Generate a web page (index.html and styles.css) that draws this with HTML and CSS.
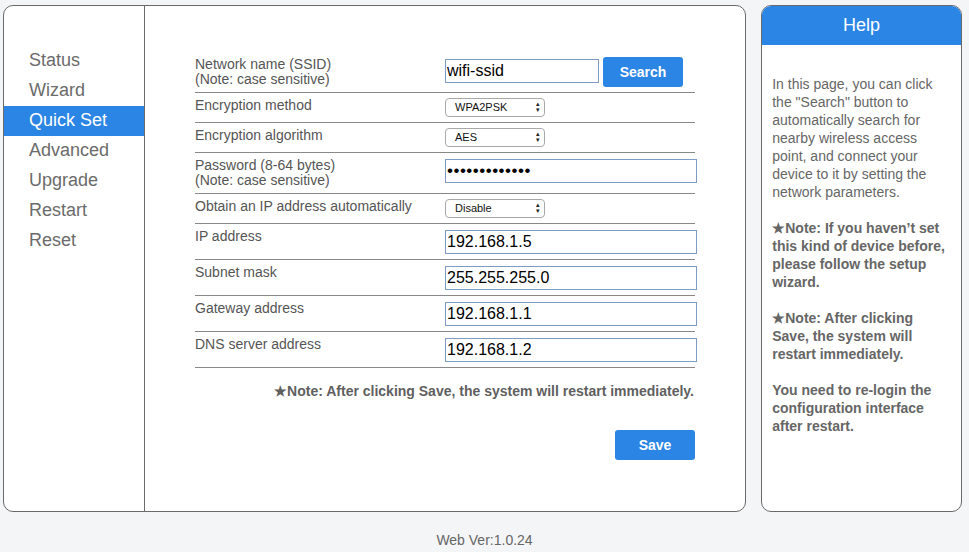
FILE: index.html
```html
<!DOCTYPE html>
<html>
<head>
<meta charset="utf-8">
<link rel="stylesheet" href="styles.css">
</head>
<body>
<div class="page">
  <div class="main-card">
    <nav class="sidebar">
      <div class="menu-item">Status</div>
      <div class="menu-item">Wizard</div>
      <div class="menu-item active">Quick Set</div>
      <div class="menu-item">Advanced</div>
      <div class="menu-item">Upgrade</div>
      <div class="menu-item">Restart</div>
      <div class="menu-item">Reset</div>
    </nav>
    <div class="content">
      <table class="form">
        <tr>
          <td class="label">Network name (SSID)<br>(Note: case sensitive)</td>
          <td class="field"><div class="ssid-line"><input class="text ssid" type="text" value="wifi-ssid"><button class="btn">Search</button></div></td>
        </tr>
        <tr>
          <td class="label">Encryption method</td>
          <td class="field"><div class="select"><span>WPA2PSK</span><span class="arrows">&#9652;<br>&#9662;</span></div></td>
        </tr>
        <tr>
          <td class="label">Encryption algorithm</td>
          <td class="field"><div class="select"><span>AES</span><span class="arrows">&#9652;<br>&#9662;</span></div></td>
        </tr>
        <tr>
          <td class="label">Password (8-64 bytes)<br>(Note: case sensitive)</td>
          <td class="field"><input class="text pwd" type="password" value="wifipassword1"></td>
        </tr>
        <tr>
          <td class="label">Obtain an IP address automatically</td>
          <td class="field"><div class="select"><span>Disable</span><span class="arrows">&#9652;<br>&#9662;</span></div></td>
        </tr>
        <tr>
          <td class="label">IP address</td>
          <td class="field"><input class="text wide" type="text" value="192.168.1.5"></td>
        </tr>
        <tr>
          <td class="label">Subnet mask</td>
          <td class="field"><input class="text wide" type="text" value="255.255.255.0"></td>
        </tr>
        <tr>
          <td class="label">Gateway address</td>
          <td class="field"><input class="text wide" type="text" value="192.168.1.1"></td>
        </tr>
        <tr>
          <td class="label">DNS server address</td>
          <td class="field"><input class="text wide" type="text" value="192.168.1.2"></td>
        </tr>
      </table>
      <p class="note">&#9733;Note: After clicking Save, the system will restart immediately.</p>
      <div class="actions"><button class="btn">Save</button></div>
    </div>
  </div>
  <aside class="help-card">
    <div class="help-head">Help</div>
    <div class="help-body">
      In this page, you can click the "Search" button to automatically search for nearby wireless access point, and connect your device to it by setting the network parameters.<br><br>
      <b>&#9733;Note: If you haven’t set this kind of device before, please follow the setup wizard.</b><br><br>
      <b>&#9733;Note: After clicking Save, the system will restart immediately.</b><br><br>
      <b>You need to re-login the configuration interface after restart.</b>
    </div>
  </aside>
</div>
<footer class="footer">Web Ver:1.0.24</footer>
</body>
</html>
```

FILE: styles.css
```css
html, body {
  margin: 0;
  padding: 0;
}
body {
  background: #f4f5f7;
  font-family: "Liberation Sans", Arial, sans-serif;
  color: #666;
}
.page {
  display: flex;
  gap: 15px;
  padding: 5px 7px 0 3px;
}
.main-card {
  width: 744px;
  height: 507px;
  box-sizing: border-box;
  border: 1px solid #6a6a6a;
  border-radius: 10px;
  background: #fff;
  display: flex;
  overflow: hidden;
}
.sidebar {
  width: 140px;
  flex: none;
  border-right: 1px solid #6a6a6a;
  padding-top: 40px;
}
.menu-item {
  height: 30px;
  line-height: 29px;
  font-size: 18px;
  padding-left: 25px;
  color: #6b6b6b;
}
.menu-item.active {
  background: #2b85e4;
  color: #fff;
}
.content {
  flex: 1;
  padding: 46px 0 0 50px;
}
.form {
  width: 500px;
  table-layout: fixed;
  border-collapse: collapse;
  font-size: 14px;
  color: #555;
}
.form tr {
  border-bottom: 1px solid #888;
}
.form td {
  vertical-align: top;
  padding: 5px 0;
  line-height: 15px;
}
.label {
  width: 250px;
}
.ssid-line {
  display: flex;
  gap: 4px;
  align-items: flex-start;
}
.text {
  box-sizing: border-box;
  height: 24px;
  border: 1px solid #7e9bc1;
  padding: 1px 1px;
  font-family: "Liberation Sans", Arial, sans-serif;
  font-size: 16px;
  color: #000;
  margin: 1px 0 0 0;
  display: block;
  outline: none;
  background: #fff;
}
.ssid {
  width: 154px;
  flex: none;
  margin-top: 2px;
}
.wide, .pwd {
  width: 252px;
}
.pwd {
  font-size: 17px;
  letter-spacing: 0.5px;
}
.btn {
  width: 80px;
  height: 30px;
  flex: none;
  border: none;
  border-radius: 3px;
  background: #2b85e4;
  color: #fff;
  font-family: "Liberation Sans", Arial, sans-serif;
  font-weight: bold;
  font-size: 14px;
  padding: 0;
}
.select {
  position: relative;
  box-sizing: border-box;
  width: 100px;
  height: 19px;
  border: 1px solid #a8a8a8;
  border-radius: 4px;
  background: #fff;
  font-size: 11px;
  line-height: 17px;
  color: #111;
  padding-left: 9px;
}
.arrows {
  position: absolute;
  right: 4px;
  top: 2px;
  font-size: 7px;
  line-height: 6px;
  color: #222;
}
.note {
  margin: 15px 0 0 0;
  width: 499px;
  text-align: right;
  font-size: 14px;
  font-weight: bold;
  color: #5f5f5f;
}
.actions {
  width: 500px;
  display: flex;
  justify-content: flex-end;
  margin-top: 31px;
}
.help-card {
  width: 201px;
  height: 507px;
  box-sizing: border-box;
  border: 1px solid #6a6a6a;
  border-radius: 10px;
  background: #fff;
  overflow: hidden;
}
.help-head {
  margin: -1px -1px 0 -1px;
  height: 40px;
  line-height: 40px;
  background: #2b85e4;
  color: #fff;
  font-size: 18px;
  text-align: center;
}
.help-body {
  padding: 30px 10px 0 10px;
  font-size: 14px;
  line-height: 18px;
  color: #666;
}
.help-body b {
  color: #666;
}
.footer {
  text-align: center;
  font-size: 14px;
  color: #666;
  padding-top: 20px;
}
```
